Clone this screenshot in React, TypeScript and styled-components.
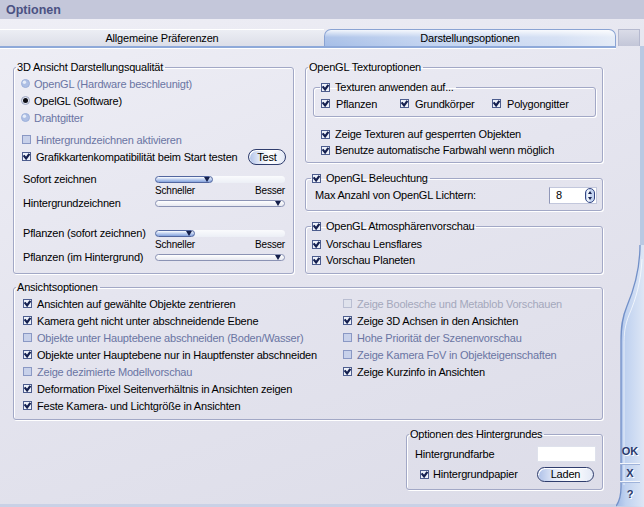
import React from 'react';
import styled, {createGlobalStyle} from 'styled-components';

const GlobalStyle = createGlobalStyle`
  html, body {
    margin: 0;
    padding: 0;
  }
  body {
    font-family: "Liberation Sans", Arial, sans-serif;
    font-size: 11px;
    color: #000;
  }
`;

type Tone = 'normal' | 'dim' | 'off';
const toneColor: { [key in Tone]: string } = {
    normal: '#000000',
    dim: '#6a75a3',
    off: '#a4a8bc',
};

const Window = styled.div`
  width: 644px;
  height: 507px;
  display: flex;
  flex-direction: column;
  overflow: hidden;
  letter-spacing: -0.2px;
  background: linear-gradient(160deg, #efeff6 0%, #e5e5ef 45%, #dcdce8 100%);
  box-shadow: inset 0 -3px 0 #c9d1e6;
`;

const TitleBar = styled.div`
  height: 19px;
  line-height: 20px;
  padding-left: 6px;
  background: #c4c7da;
  color: #4b5283;
  font-weight: bold;
  font-size: 12.5px;
  letter-spacing: 0;
`;

const Frame = styled.div`
  flex: 1;
  display: flex;
  min-height: 0;
`;

const Main = styled.div`
  flex: 1;
  display: flex;
  flex-direction: column;
  min-width: 0;
`;

const TabStrip = styled.div`
  margin-top: 10px;
  display: flex;
  height: 17px;
  border-bottom: 2px solid #8ea9d9;
  box-shadow: 0 1px 0 #ffffff;
`;

const Tab = styled.div<{ $active?: boolean; $w: number }>`
  width: ${p => p.$w}px;
  box-sizing: border-box;
  text-align: center;
  line-height: 16px;
  ${p => p.$active ? `
    border: 1px solid #8aa3d3;
    border-bottom: none;
    border-radius: 7px 7px 0 0;
    background:
      linear-gradient(180deg, rgba(255,255,255,0.85) 0%, rgba(255,255,255,0.1) 45%, rgba(255,255,255,0) 100%),
      linear-gradient(90deg, #a6bee7 0%, #c2d3f0 35%, #d2def3 80%, #e4ebf7 100%);
  ` : `
    border-top: 1px solid #ffffff;
    background: linear-gradient(180deg, #eceef4 0%, #dcdee8 100%);
  `}
`;

const Content = styled.div`
  padding: 13px 13px 0;
  display: flex;
  flex-direction: column;
`;

const TopGrid = styled.div`
  display: grid;
  grid-template-columns: 281px 298px;
  column-gap: 11px;
`;

const Column = styled.div`
  display: flex;
  flex-direction: column;
  gap: 9px;
`;

const Group = styled.fieldset<{ $mt?: number; $w?: number }>`
  margin: ${p => p.$mt ?? 0}px 0 0;
  padding: 0;
  border: 1px solid #a2a8c6;
  border-radius: 3px;
  box-shadow: inset 1px 1px 0 #ffffff, 1px 1px 0 #ffffff;
  min-width: 0;
  ${p => p.$w ? `width: ${p.$w}px; box-sizing: border-box; align-self: flex-end;` : ''}
`;

const InnerGroup = styled(Group)`
  margin: 8px 0 0 -8px;
  width: 283px;
  box-sizing: border-box;
`;

const GroupBody = styled.div<{ $pad: string }>`
  padding: ${p => p.$pad};
`;

const Legend = styled.legend<{ $indent?: number }>`
  display: flex;
  align-items: center;
  gap: 5px;
  padding: 0 2px 0 1px;
  margin-left: ${p => p.$indent ?? 2}px;
  line-height: 12px;
  height: 12px;
  white-space: nowrap;
`;

const Row = styled.div<{ $h?: number; $gap?: number; $indent?: number }>`
  display: flex;
  align-items: center;
  gap: ${p => p.$gap ?? 5}px;
  height: ${p => p.$h ?? 17}px;
  margin-left: ${p => p.$indent ?? 0}px;
  white-space: nowrap;
`;

const Label = styled.span<{ $tone?: Tone }>`
  color: ${p => toneColor[p.$tone ?? 'normal']};
`;

const Spaced = styled.div<{ $mt: number }>`
  margin-top: ${p => p.$mt}px;
`;

const PillButton = styled.button<{ $w: number; $h: number; $mr?: number }>`
  width: ${p => p.$w}px;
  height: ${p => p.$h}px;
  margin: 0 ${p => p.$mr ?? 0}px 0 auto;
  padding: 0;
  font: inherit;
  letter-spacing: inherit;
  color: #000;
  border: 1px solid #2f3d6d;
  border-radius: 999px;
  background: linear-gradient(90deg, #aec1e8 0%, #e4eaf8 30%, #ffffff 60%, #e3e9f6 100%);
  box-shadow: inset 1px 1px 0 #ffffff;
`;

const SliderGrid = styled.div<{ $mt: number }>`
  display: grid;
  grid-template-columns: 132px 130px;
  grid-auto-rows: 12px;
  align-items: center;
  margin: ${p => p.$mt}px 0 0 1px;
  white-space: nowrap;
`;

const ScaleLabels = styled.div`
  grid-column: 2;
  display: flex;
  justify-content: space-between;
  font-size: 10px;
  line-height: 12px;
`;

const SliderTrack = styled.div`
  height: 7px;
  border-radius: 4px;
  background: linear-gradient(180deg, #fafbfd 0%, #eceff6 100%);
`;

const SliderBar = styled.div<{ $w: string; $active?: boolean }>`
  position: relative;
  width: ${p => p.$w};
  height: 7px;
  box-sizing: border-box;
  border-radius: 4px;
  border: 1px solid ${p => p.$active ? '#52669f' : '#8b93b4'};
  background: ${p => p.$active
    ? 'linear-gradient(180deg, #ffffff 0%, #c8d7f3 40%, #85a2dc 100%)'
    : 'linear-gradient(180deg, #ffffff 0%, #e6e8f0 100%)'};
`;

const Thumb = styled.span<{ $right: number }>`
  position: absolute;
  right: ${p => p.$right}px;
  top: 0;
  width: 0;
  height: 0;
  border-left: 3px solid transparent;
  border-right: 3px solid transparent;
  border-top: 5px solid #141f4a;
`;

const Pair = styled.div`
  display: flex;
  height: 17px;
  align-items: center;
`;

const PairItem = styled.div<{ $w?: number }>`
  display: flex;
  align-items: center;
  gap: 6px;
  width: ${p => p.$w ? `${p.$w}px` : 'auto'};
`;

const Spin = styled.div`
  display: flex;
  align-items: center;
  width: 48px;
  height: 17px;
  margin-left: auto;
  box-sizing: border-box;
  padding: 0 1px 0 6px;
  background: #ffffff;
  border: 1px solid #c2c7dc;
  border-left-color: #9097b8;
`;

const SpinValue = styled.span`
  flex: 1;
`;

const ColorField = styled.div`
  width: 59px;
  height: 16px;
  margin-left: auto;
  background: #ffffff;
  border: 1px solid #dfe2ec;
  box-sizing: border-box;
`;

const ViewGrid = styled.div`
  display: flex;
`;

const ViewColumn = styled.div<{ $w?: number }>`
  display: flex;
  flex-direction: column;
  width: ${p => p.$w ? `${p.$w}px` : 'auto'};
`;

const Side = styled.div`
  position: relative;
  width: 28px;
  display: flex;
  flex-direction: column;
`;

const SideArt = styled.svg`
  position: absolute;
  left: 0;
  top: 0;
  z-index: 0;
`;

const TabBlock = styled.div`
  position: relative;
  margin: 10px 4px 0 2px;
  height: 17px;
  box-sizing: border-box;
  border: 1px solid #b5b9cf;
  border-bottom: none;
  background: linear-gradient(180deg, #dadce8 0%, #c3c6d8 100%);
`;

const ButtonStack = styled.div`
  position: relative;
  z-index: 1;
  margin: auto 4px 2px 4px;
  display: flex;
  flex-direction: column;
`;

const SideButton = styled.div<{ $h: number }>`
  height: ${p => p.$h}px;
  display: flex;
  align-items: center;
  justify-content: center;
  font-weight: bold;
  font-size: 11px;
  letter-spacing: 0;
  color: #2a396b;
  text-shadow: 1px 1px 0 #ffffff;
  & + & {
    border-top: 1px solid #f4f7fc;
    box-shadow: inset 0 1px 0 #9fb3da;
  }
`;

const Box = styled.svg<{ $shift?: number }>`
  flex: none;
  display: block;
  margin-left: ${p => p.$shift ?? 0}px;
`;

const Check: React.FC<{ on?: boolean; tone?: Tone }> = ({on, tone = 'normal'}) => {
    const fill = on ? '#eef2fa' : tone === 'off' ? '#dfe2ec' : '#c8d1ea';
    const stroke = on ? '#4d5d8e' : tone === 'off' ? '#b9bed2' : '#8a98c4';
    return (
        <Box width="9" height="9" viewBox="0 0 9 9">
            <rect x="0.5" y="0.5" width="8" height="8" fill={fill} stroke={stroke}/>
            {on && <path d="M1.6 3.4 L4.1 6.5 L7.4 1.8" fill="none" stroke="#152050" strokeWidth="2.2"/>}
        </Box>
    );
};

const Radio: React.FC<{ on?: boolean }> = ({on}) => (
    <Box width="9" height="9" viewBox="0 0 9 9" $shift={-1}>
        <circle cx="4.5" cy="4.5" r="4" fill={on ? '#e4e8f2' : '#aebfe4'} stroke={on ? '#9aa2bf' : '#9cb0da'}/>
        {on
            ? <circle cx="4.5" cy="4.5" r="2.5" fill="#0d0d14"/>
            : <circle cx="3.4" cy="3.3" r="1.7" fill="#e6edf9"/>}
    </Box>
);

const SpinArrows: React.FC = () => (
    <Box width="10" height="15" viewBox="0 0 10 15">
        <rect x="0.5" y="0.5" width="9" height="14" rx="4.5" fill="#c4d4f0" stroke="#354683"/>
        <rect x="2" y="1.5" width="3" height="12" rx="1.5" fill="#eef3fb"/>
        <path d="M3 6 L5 3 L7 6 Z" fill="#1b2656"/>
        <path d="M3 9 L5 12 L7 9 Z" fill="#1b2656"/>
    </Box>
);

type Item = { text: string; on?: boolean; tone?: Tone };

const viewLeft: Item[] = [
    {text: 'Ansichten auf gewählte Objekte zentrieren', on: true},
    {text: 'Kamera geht nicht unter abschneidende Ebene', on: true},
    {text: 'Objekte unter Hauptebene abschneiden (Boden/Wasser)', tone: 'dim'},
    {text: 'Objekte unter Hauptebene nur in Hauptfenster abschneiden', on: true},
    {text: 'Zeige dezimierte Modellvorschau', tone: 'dim'},
    {text: 'Deformation Pixel Seitenverhältnis in Ansichten zeigen', on: true},
    {text: 'Feste Kamera- und Lichtgröße in Ansichten', on: true},
];

const viewRight: Item[] = [
    {text: 'Zeige Boolesche und Metablob Vorschauen', tone: 'off'},
    {text: 'Zeige 3D Achsen in den Ansichten', on: true},
    {text: 'Hohe Priorität der Szenenvorschau', tone: 'dim'},
    {text: 'Zeige Kamera FoV in Objekteigenschaften', tone: 'dim'},
    {text: 'Zeige Kurzinfo in Ansichten', on: true},
];

const CheckRow: React.FC<{ item: Item; h?: number }> = ({item, h}) => (
    <Row $h={h}>
        <Check on={item.on} tone={item.tone}/>
        <Label $tone={item.tone}>{item.text}</Label>
    </Row>
);

const Slider: React.FC<{ fill?: number; thumbRight: number }> = ({fill, thumbRight}) => (
    fill
        ? <SliderTrack>
            <SliderBar $w={`${fill}px`} $active>
                <Thumb $right={thumbRight}/>
            </SliderBar>
        </SliderTrack>
        : <SliderBar $w="100%">
            <Thumb $right={thumbRight}/>
        </SliderBar>
);

const App: React.FC = () => {
    return (
        <Window>
            <GlobalStyle/>
            <TitleBar>Optionen</TitleBar>
            <Frame>
                <Main>
                    <TabStrip>
                        <Tab $w={324}>Allgemeine Präferenzen</Tab>
                        <Tab $w={292} $active>Darstellungsoptionen</Tab>
                    </TabStrip>
                    <Content>
                        <TopGrid>
                            <Group>
                                <Legend>3D Ansicht Darstellungsqualität</Legend>
                                <GroupBody $pad="2px 7px 0 8px">
                                    <Row $gap={4}><Radio/><Label $tone="dim">OpenGL (Hardware beschleunigt)</Label></Row>
                                    <Row $gap={4}><Radio on/><Label>OpelGL (Software)</Label></Row>
                                    <Row $gap={4}><Radio/><Label $tone="dim">Drahtgitter</Label></Row>
                                    <Spaced $mt={5}>
                                        <CheckRow item={{text: 'Hintergrundzeichnen aktivieren', tone: 'dim'}}/>
                                        <Row>
                                            <Check on/>
                                            <Label>Grafikkartenkompatibilität beim Start testen</Label>
                                            <PillButton $w={38} $h={16}>Test</PillButton>
                                        </Row>
                                    </Spaced>
                                    <SliderGrid $mt={8}>
                                        <span>Sofort zeichnen</span>
                                        <Slider fill={58} thumbRight={2}/>
                                        <ScaleLabels><span>Schneller</span><span>Besser</span></ScaleLabels>
                                        <span>Hintergrundzeichnen</span>
                                        <Slider thumbRight={3}/>
                                    </SliderGrid>
                                    <SliderGrid $mt={18}>
                                        <span>Pflanzen (sofort zeichnen)</span>
                                        <Slider fill={40} thumbRight={2}/>
                                        <ScaleLabels><span>Schneller</span><span>Besser</span></ScaleLabels>
                                        <span>Pflanzen (im Hintergrund)</span>
                                        <Slider thumbRight={3}/>
                                    </SliderGrid>
                                </GroupBody>
                            </Group>
                            <Column>
                                <Group>
                                    <Legend>OpenGL Texturoptionen</Legend>
                                    <GroupBody $pad="0 7px 4px 15px">
                                        <InnerGroup>
                                            <Legend $indent={6}><Check on/>Texturen anwenden auf...</Legend>
                                            <GroupBody $pad="2px 7px 4px 7px">
                                                <Pair>
                                                    <PairItem $w={79}><Check on/>Pflanzen</PairItem>
                                                    <PairItem $w={92}><Check on/>Grundkörper</PairItem>
                                                    <PairItem><Check on/>Polygongitter</PairItem>
                                                </Pair>
                                            </GroupBody>
                                        </InnerGroup>
                                        <Spaced $mt={9}>
                                            <CheckRow h={16} item={{text: 'Zeige Texturen auf gesperrten Objekten', on: true}}/>
                                            <CheckRow h={16} item={{text: 'Benutze automatische Farbwahl wenn möglich', on: true}}/>
                                        </Spaced>
                                    </GroupBody>
                                </Group>
                                <Group>
                                    <Legend $indent={5}><Check on/>OpenGL Beleuchtung</Legend>
                                    <GroupBody $pad="2px 5px 6px 9px">
                                        <Row $h={18}>
                                            <Label>Max Anzahl von OpenGL Lichtern:</Label>
                                            <Spin>
                                                <SpinValue>8</SpinValue>
                                                <SpinArrows/>
                                            </Spin>
                                        </Row>
                                    </GroupBody>
                                </Group>
                                <Group>
                                    <Legend $indent={5}><Check on/>OpenGL Atmosphärenvorschau</Legend>
                                    <GroupBody $pad="4px 5px 5px 6px">
                                        <CheckRow h={16} item={{text: 'Vorschau Lensflares', on: true}}/>
                                        <CheckRow h={16} item={{text: 'Vorschau Planeten', on: true}}/>
                                    </GroupBody>
                                </Group>
                            </Column>
                        </TopGrid>
                        <Group $mt={7}>
                            <Legend>Ansichtsoptionen</Legend>
                            <GroupBody $pad="2px 8px 5px 9px">
                                <ViewGrid>
                                    <ViewColumn $w={320}>
                                        {viewLeft.map(item => <CheckRow key={item.text} item={item}/>)}
                                    </ViewColumn>
                                    <ViewColumn>
                                        {viewRight.map(item => <CheckRow key={item.text} item={item}/>)}
                                    </ViewColumn>
                                </ViewGrid>
                            </GroupBody>
                        </Group>
                        <Group $mt={8} $w={197}>
                            <Legend>Optionen des Hintergrundes</Legend>
                            <GroupBody $pad="5px 6px 6px 8px">
                                <Row $h={18}>
                                    <Label>Hintergrundfarbe</Label>
                                    <ColorField/>
                                </Row>
                                <Spaced $mt={2}>
                                    <Row $h={18} $indent={5} $gap={4}>
                                        <Check on/>
                                        <Label>Hintergrundpapier</Label>
                                        <PillButton $w={57} $h={15} $mr={2}>Laden</PillButton>
                                    </Row>
                                </Spaced>
                            </GroupBody>
                        </Group>
                    </Content>
                </Main>
                <Side>
                    <SideArt width="28" height="488" viewBox="0 0 28 488">
                        <defs>
                            <linearGradient id="wing" x1="0" y1="0" x2="1" y2="0">
                                <stop offset="0" stopColor="#9fb8e5"/>
                                <stop offset="0.35" stopColor="#c0d2f0"/>
                                <stop offset="1" stopColor="#dde6f5"/>
                            </linearGradient>
                        </defs>
                        <rect x="24" y="27" width="4" height="461" fill="#b9c9e3"/>
                        <path d="M24 226 C24 250 19 268 11 287 C6 299 5 308 5 322 L5 468 C5 478 3 483 0 487 L28 488 L28 226 Z"
                              fill="url(#wing)"/>
                        <path d="M24 226 C24 250 19 268 11 287 C6 299 5 308 5 322 L5 468 C5 478 3 483 0 487"
                              fill="none" stroke="#7290c8" strokeWidth="1.3"/>
                        <path d="M26 240 C25 262 20 280 13 296 C9 306 8 314 8 326 L8 466"
                              fill="none" stroke="#ffffff" strokeOpacity="0.7" strokeWidth="1"/>
                    </SideArt>
                    <TabBlock/>
                    <ButtonStack>
                        <SideButton $h={24}>OK</SideButton>
                        <SideButton $h={17}>X</SideButton>
                        <SideButton $h={23}>?</SideButton>
                    </ButtonStack>
                </Side>
            </Frame>
        </Window>
    );
};

export default App;
